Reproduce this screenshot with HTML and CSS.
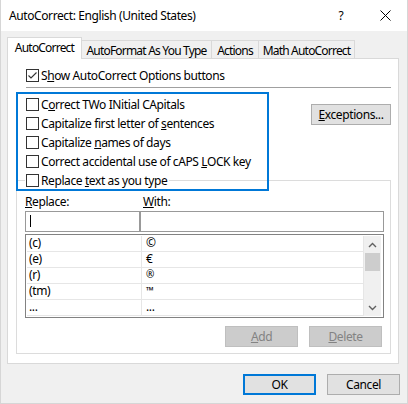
FILE: index.html
```html
<!DOCTYPE html>
<html>
<head>
<meta charset="utf-8">
<link rel="stylesheet" href="styles.css">
</head>
<body>
<div class="window">
  <div class="titlebar">
    <span class="title">AutoCorrect: English (United States)</span>
    <span class="help">?</span>
    <span class="close"><svg width="11" height="11" viewBox="0 0 11 11"><path d="M0.5 0.5L10.5 10.5M10.5 0.5L0.5 10.5" stroke="#000" stroke-width="1" fill="none"/></svg></span>
  </div>
  <div class="tabs">
    <div class="tab active">AutoCorrect</div>
    <div class="tab t2">AutoFormat As You Type</div>
    <div class="tab t3">Actions</div>
    <div class="tab t4">Math AutoCorrect</div>
  </div>
  <div class="panel">
    <div class="show-row"><span class="cb"><svg width="11" height="11" viewBox="0 0 11 11"><polyline points="1.5,5.5 4,8 9.5,2.5" stroke="#333" stroke-width="1.1" fill="none"/></svg></span><span>S<u>h</u>ow AutoCorrect Options buttons</span></div>
    <div class="options">
      <div class="opt-list">
        <div class="opt"><span class="cb"></span><span>C<u>o</u>rrect TWo INitial CApitals</span></div>
        <div class="opt"><span class="cb"></span><span>Capitalize first letter of <u>s</u>entences</span></div>
        <div class="opt"><span class="cb"></span><span>Capitalize <u>n</u>ames of days</span></div>
        <div class="opt"><span class="cb"></span><span>Correct accidental use of cAPS <u>L</u>OCK key</span></div>
      </div>
      <button class="btn exceptions"><span><u>E</u>xceptions...</span></button>
    </div>
    <fieldset class="group">
      <legend class="legend"><span class="opt"><span class="cb"></span><span>Replace <u>t</u>ext as you type</span></span></legend>
      <div class="labels"><span class="lbl-replace"><u>R</u>eplace:</span><span class="lbl-with"><u>W</u>ith:</span></div>
      <div class="inputs"><div class="input replace"><span class="caret"></span></div><div class="input with"></div></div>
      <div class="list">
        <div class="rows">
          <div class="row"><span class="c1">(c)</span><span class="c2">©</span></div>
          <div class="row"><span class="c1">(e)</span><span class="c2">€</span></div>
          <div class="row"><span class="c1">(r)</span><span class="c2 small">®</span></div>
          <div class="row"><span class="c1">(tm)</span><span class="c2 small">™</span></div>
          <div class="row"><span class="c1">...</span><span class="c2">...</span></div>
        </div>
        <div class="scrollbar">
          <div class="sb-btn"><svg width="9" height="6" viewBox="0 0 9 6"><path d="M1 5L4.5 1.5L8 5" stroke="#606060" stroke-width="1.4" fill="none"/></svg></div>
          <div class="sb-track"><div class="thumb"></div></div>
          <div class="sb-btn"><svg width="9" height="6" viewBox="0 0 9 6"><path d="M1 1L4.5 4.5L8 1" stroke="#606060" stroke-width="1.4" fill="none"/></svg></div>
        </div>
      </div>
      <div class="list-buttons">
        <button class="btn disabled"><span><u>A</u>dd</span></button>
        <button class="btn disabled"><span><u>D</u>elete</span></button>
      </div>
    </fieldset>
  </div>
  <div class="footer">
    <button class="btn ok">OK</button>
    <button class="btn">Cancel</button>
  </div>
  <div class="highlight"></div>
</div>
</body>
</html>
```
FILE: styles.css
```css
* { box-sizing: border-box; }
html, body { margin: 0; padding: 0; }
body {
  background: #ffffff;
  font-family: "Noto Sans", "Open Sans", sans-serif;
  font-size: 12px;
  letter-spacing: -0.4px;
  color: #000;
}
u { text-decoration: underline; text-underline-offset: 1px; }

.window {
  position: relative;
  width: 408px;
  height: 404px;
  background: #f0f0f0;
  border: 1px solid #d6d6d6;
  border-top: none;
}

.titlebar {
  height: 31px;
  background: #fff;
  display: flex;
  align-items: center;
  padding-left: 8px;
  line-height: 31px;
}
.help { margin-left: auto; width: 20px; text-align: center; }
.close { width: 20px; margin-left: 24px; margin-right: 12px; display: flex; justify-content: center; }
.close svg { display: block; }

.tabs {
  display: flex;
  align-items: flex-end;
  margin-top: 6px;
  padding-left: 6px;
  height: 21px;
}
.tab {
  height: 18px;
  border-top: 1px solid #d9d9d9;
  border-right: 1px solid #d9d9d9;
  background: #f0f0f0;
  text-align: center;
  line-height: 19px;
  white-space: nowrap;
  letter-spacing: -0.8px;
}
.tab.active {
  width: 75px;
  height: 22px;
  border-left: 1px solid #d9d9d9;
  background: #fff;
  margin-bottom: -1px;
  position: relative;
  z-index: 1;
}
.t2 { width: 130px; }
.t3 { width: 47px; }
.t4 { width: 96px; }

.panel {
  margin: 0 8px 0 6px;
  border: 1px solid #d9d9d9;
  background: #fff;
  padding-bottom: 9px;
}

.cb {
  width: 13px;
  height: 13px;
  border: 1px solid #333;
  background: #fff;
  margin-right: 2px;
  flex: none;
  display: block;
}
.cb svg { display: block; }

.show-row {
  margin: 7px 7px 0 18px;
  height: 22px;
  padding-bottom: 2px;
  border-bottom: 1px solid #a0a0a0;
  display: flex;
  align-items: center;
  line-height: 19px;
}

.options { display: flex; margin-top: 7px; }
.opt-list { margin-left: 18px; flex: 1; }
.opt {
  height: 19px;
  display: flex;
  align-items: center;
  line-height: 19px;
  white-space: nowrap;
}

.btn {
  font-family: inherit;
  font-size: 12px;
  letter-spacing: -0.4px;
  color: #000;
  background: #e1e1e1;
  border: 1px solid #adadad;
  padding: 0;
  margin: 0;
  width: 73px;
  height: 21px;
  display: flex;
  align-items: center;
  justify-content: center;
  line-height: 16px;
}
.exceptions { width: 80px; margin: 9px 7px 0 0; flex: none; }
.btn.disabled { background: #cccccc; border-color: #bfbfbf; color: #838383; }
.btn.ok { border: 2px solid #0078d7; }

.group {
  margin: 0 7px 0 8px;
  border: 1px solid #dcdcdc;
  padding: 0 6px 6px 8px;
  min-width: 0;
}
.legend { padding: 0 2px 0 1px; margin: 0; height: 19px; }

.labels {
  display: flex;
  height: 21px;
  padding-top: 3px;
  line-height: 18px;
}
.lbl-replace { width: 118px; }

.inputs { display: flex; height: 21px; }
.input { height: 21px; border: 1px solid #999; background: #fff; }
.input.replace { width: 115px; }
.input.with { width: 244px; }
.caret { display: block; width: 1px; height: 12px; background: #000; margin: 3px 0 0 4px; }

.list {
  margin-top: 2px;
  height: 84px;
  border: 1px solid #828282;
  padding: 1px 2px 1px 1px;
  display: flex;
  background: #fff;
}
.rows { flex: 1; }
.row {
  height: 16px;
  border-bottom: 1px solid #e6e6e6;
  border-right: 1px solid #e6e6e6;
  display: flex;
  line-height: 13px;
}
.c1 { width: 115px; border-right: 1px solid #e6e6e6; padding-left: 2px; }
.c2 { padding-left: 4px; }
.c2.small { font-size: 10px; }

.scrollbar {
  width: 17px;
  background: #f0f0f0;
  display: flex;
  flex-direction: column;
}
.sb-btn { height: 17px; display: flex; align-items: center; justify-content: center; }
.sb-btn svg { display: block; }
.sb-track { flex: 1; }
.thumb { height: 18px; margin: 0 1px; background: #cdcdcd; }

.list-buttons {
  display: flex;
  justify-content: flex-end;
  gap: 11px;
  margin-top: 8px;
  padding-right: 2px;
}

.footer {
  display: flex;
  justify-content: flex-end;
  gap: 11px;
  margin: 10px 7px 0 0;
}

.highlight {
  position: absolute;
  left: 15px;
  top: 92px;
  width: 253px;
  height: 99px;
  border: 2px solid #0078d7;
}
```
